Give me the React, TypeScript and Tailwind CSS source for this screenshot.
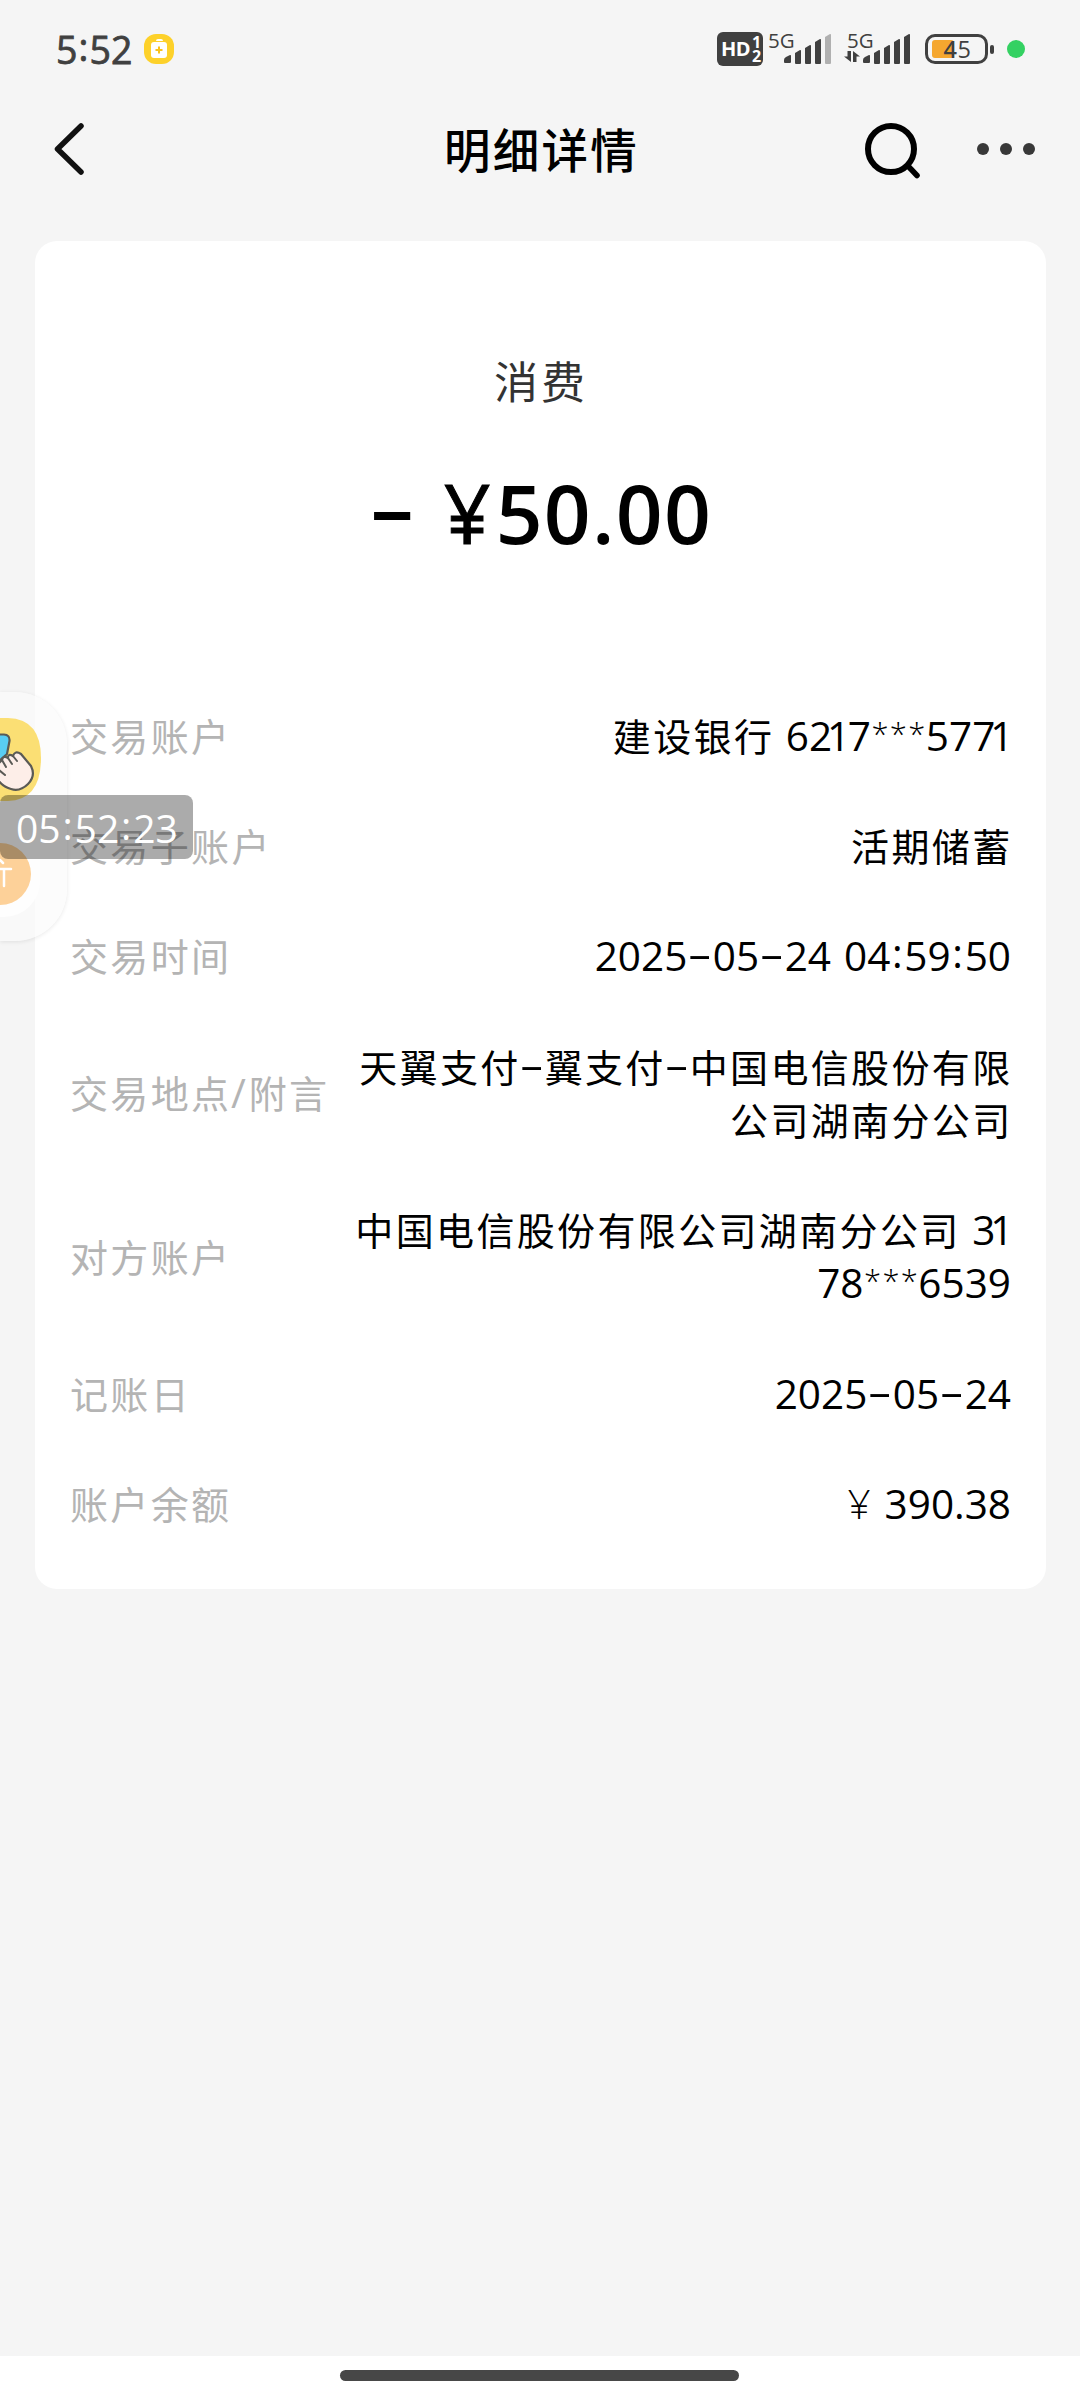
import { Fragment } from 'react';

interface DetailRow {
  label: string;
  lines: string[];
}

const details: DetailRow[] = [
  { label: '交易账户', lines: ['建设银行 6217***5771'] },
  { label: '交易子账户', lines: ['活期储蓄'] },
  { label: '交易时间', lines: ['2025-05-24 04:59:50'] },
  { label: '交易地点/附言', lines: ['天翼支付-翼支付-中国电信股份有限', '公司湖南分公司'] },
  { label: '对方账户', lines: ['中国电信股份有限公司湖南分公司 31', '78***6539'] },
  { label: '记账日', lines: ['2025-05-24'] },
  { label: '账户余额', lines: ['¥ 390.38'] },
];

const cjk = /[\u4e00-\u9fff]+/;

// Chinese runs are set a little smaller and wider than the figures beside them
function MixedText({ text }: { text: string }) {
  const parts = text.split(/([\u4e00-\u9fff]+|-|1|:|\*|¥| |\/)/).filter(Boolean);
  return (
    <>
      {parts.map((part, i) => {
        if (cjk.test(part)) {
          return <span key={i} className="text-[38px] leading-none tracking-[2.35px] -mr-[1.5px]">{part}</span>;
        }
        switch (part) {
          case '-':
            return <span key={i} className="inline-block leading-none w-[25.5px] text-center scale-x-[1.9] -translate-y-[3px]">-</span>;
          case '1':
            return <span key={i} className="-ml-[5px] -mr-[2.5px]">1</span>;
          case ':':
            return <span key={i} className="inline-block leading-none w-[14px] text-center -translate-y-[3px]">:</span>;
          case '*':
            return <span key={i} className="inline-block leading-none w-[18.3px] text-center text-[31px] font-light -translate-y-1.5">*</span>;
          case '¥':
            return <span key={i} className="mr-px font-light">¥</span>;
          case '/':
            return <span key={i} className="ml-px mr-[3px]">/</span>;
          case ' ':
            return <span key={i} className="tracking-[2.5px]"> </span>;
          default:
            return <Fragment key={i}>{part}</Fragment>;
        }
      })}
    </>
  );
}

function SignalBars({ weak = false }: { weak?: boolean }) {
  return (
    <svg viewBox="0 0 48 32" className="w-12 h-8" fill="#404040">
      <path d="M0 30v-3q0-2 2-3l4-2q1-.4 1 1v6q0 1-1 1H1q-1 0-1-1z" />
      <path d="M11 30V20l5-3q1-.3 1 1v12q0 1-1 1h-4q-1 0-1-1z" />
      <path d="M21 30V15l5-3q1-.3 1 1v17q0 1-1 1h-4q-1 0-1-1z" />
      <path d="M31 30V9l5-3q1-.3 1 1v23q0 1-1 1h-4q-1 0-1-1z" />
      <path d="M41 30V4l5-3q1-.3 1 1v28q0 1-1 1h-4q-1 0-1-1z" fill={weak ? '#b0b0b0' : '#404040'} />
    </svg>
  );
}

function StatusBar() {
  return (
    <div className="h-[98px] flex items-center pl-[56px] pr-[55px] text-[#404040]">
      <span className="text-[37.5px] leading-none [-webkit-text-stroke:0.8px_#404040] translate-y-px">
        5<span className="inline-block w-[12px] text-center -translate-y-[3px]">:</span>52
      </span>
      <svg viewBox="0 0 30 30" className="w-[30px] h-[30px] ml-3">
        <rect width="30" height="30" rx="12" fill="#fdd12a" />
        <path d="M12 7q0-2 2-2h3q2 0 2 2" fill="#fff" />
        <rect x="7" y="8" width="16" height="16" rx="3" fill="#fff" />
        <path d="M15 12.500v7M11.500 16h7" stroke="#f9c21c" strokeWidth="2" />
      </svg>

      <div className="ml-auto flex items-center">
        <div className="w-[46px] h-[34px] rounded-md bg-[#404040] text-white flex items-center pl-1 font-bold">
          <span className="text-[20px] leading-none tracking-[-0.5px]">HD</span>
          <span className="pl-0.5 text-[16px] leading-[14px] flex flex-col">
            <span>1</span>
            <span>2</span>
          </span>
        </div>
        <div className="relative">
          <div className="pl-[21px]"><SignalBars weak /></div>
          <span className="absolute left-[5px] -top-[3px] text-[20.5px] leading-none">5G</span>
        </div>
        <div className="relative ml-2.5">
          <div className="pl-[21px]"><SignalBars /></div>
          <span className="absolute left-[5px] -top-[3px] text-[20.5px] leading-none">5G</span>
          <svg viewBox="0 0 16 12" className="absolute left-0.5 bottom-0.5 w-4 h-3" fill="#404040">
            <path d="M3.500 0H7v11L0 5.500h3.500zM9 11V0l7 5.500h-3.500V11z" />
          </svg>
        </div>
        <div className="relative ml-3.5 w-[63px] h-[30px] rounded-[10px] border-[3px] border-[#404040] flex items-center">
          <div className="ml-1 w-[22px] h-[18px] rounded-[3px] bg-[#f5a72f]" />
          <span className="absolute inset-0 pl-0.5 text-center text-[23.5px] leading-6 tracking-[0.5px]">
            <span className="font-semibold">4</span>5
          </span>
        </div>
        <div className="w-1 h-[9px] ml-0.5 rounded-sm bg-[#404040]" />
        <div className="w-[18px] h-[18px] ml-[13px] rounded-full bg-[#34d162]" />
      </div>
    </div>
  );
}

function Header() {
  return (
    <div className="relative h-[102px] flex items-center justify-between pl-[54px] pr-[45px]">
      <svg viewBox="0 0 30 52" className="w-[30px] h-[52px]" fill="none" stroke="#111" strokeWidth="5.500" strokeLinecap="round" strokeLinejoin="round">
        <path d="M27 3L3.500 26L27 49" />
      </svg>
      <h1 className="absolute inset-0 pl-[3px] text-center text-[46.5px] leading-[104px] font-medium tracking-[2.2px] text-black">明细详情</h1>
      <div className="flex items-center gap-[57.5px]">
        <svg viewBox="0 0 56 56" className="w-14 h-14 translate-y-0.5" fill="none" stroke="#000" strokeLinecap="round">
          <circle cx="27" cy="26" r="23" strokeWidth="6" />
          <path d="M44 43l9 9.500" strokeWidth="5.500" />
        </svg>
        <div className="flex gap-[11px]">
          <i className="w-3 h-3 rounded-full bg-[#383838]" />
          <i className="w-3 h-3 rounded-full bg-[#383838]" />
          <i className="w-3 h-3 rounded-full bg-[#383838]" />
        </div>
      </div>
    </div>
  );
}

function FloatingTools() {
  return (
    <div className="absolute left-0 top-[692px] w-[67px] h-[249px] rounded-r-[52px] bg-[#fbfbfb]/70 shadow-[0_1px_4px_rgba(0,0,0,0.09)] overflow-hidden">
      <div className="absolute left-0 top-[26px] w-10 h-[199px] rounded-r-[36px] bg-white/80" />
      <svg viewBox="0 0 67 249" className="absolute inset-0 w-[67px] h-[249px]" strokeLinecap="round" strokeLinejoin="round">
        <path d="M0 26H8Q41 27 41 66Q41 108 8 109H0z" fill="#fbdf74" />
        <path d="M-2 42.500H4Q10 43 9.500 49L7 62L-2 70z" fill="#59cdf2" stroke="#5a5a55" strokeWidth="2.200" />
        <path d="M-2 72L2 68Q3 63 8 66Q8 61 13 64Q15 58 21 62L31 74Q36 84 28 92Q20 100 11 97Q3 95 -2 88z" fill="#fdeee8" stroke="#5a5a55" strokeWidth="2.200" />
        <path d="M2 68l4 7M8 66l4 6M13 64l4 5M-1 78l6 5" stroke="#5a5a55" strokeWidth="2" fill="none" />
        <circle cx="0" cy="182" r="31" fill="#fdd199" />
        <path d="M0 168l3 3M0 177h11M4 177v17" stroke="#fff" strokeWidth="2.500" />
      </svg>
    </div>
  );
}

export default function App() {
  return (
    <div className="relative w-[1080px] h-[2400px] flex flex-col overflow-hidden bg-[#f5f5f5] font-['Open_Sans','Noto_Sans_CJK_SC',sans-serif]">
      <StatusBar />
      <Header />

      <main className="mt-[41px] ml-[35px] w-[1011px] h-[1348px] rounded-[22px] bg-white px-[35px]">
        <p className="pt-[111px] h-[171px] pl-px text-center text-[44px] leading-[60px] tracking-[3px] text-[#333]">消费</p>
        <div className="h-[268px] pt-[45px] pl-1 flex justify-center text-[82px] leading-[110px] font-semibold text-black">
          <span className="inline-block scale-x-[1.75] w-[42px] text-center -translate-x-0.5 -translate-y-[6px]">-</span>
          <span className="ml-[29px] mr-[5px] font-normal [-webkit-text-stroke:1px_#000]">¥</span>
          <span className="tracking-[1.3px]">50.00</span>
        </div>
        {details.map((row) => (
          <div key={row.label} className="flex items-center justify-between py-[28.7px] text-[40.5px] leading-[53px] whitespace-pre">
            <p className="h-[53px] text-[#b4b4b4]"><MixedText text={row.label} /></p>
            <div className="text-right text-black">
              {row.lines.map((line) => (
                <p key={line} className="h-[53px]"><MixedText text={line} /></p>
              ))}
            </div>
          </div>
        ))}
      </main>

      <div className="mt-auto h-11 bg-white flex justify-center pt-3.5">
        <div className="w-[399px] h-[11px] rounded-full bg-[#474747] -translate-x-px" />
      </div>

      <FloatingTools />
      <div className="absolute left-0 top-[795px] w-[193px] h-16 rounded-lg bg-black/33 text-white text-[39px] leading-[65px] pl-4 whitespace-pre">
        <MixedText text="05:52:23" />
      </div>
    </div>
  );
}
